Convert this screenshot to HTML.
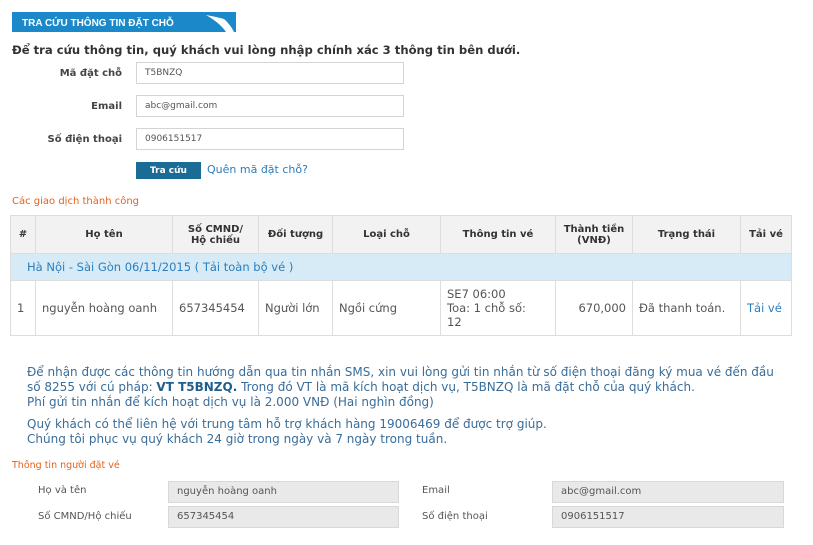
<!DOCTYPE html>
<html><head><meta charset="utf-8"><style>
*{margin:0;padding:0;box-sizing:border-box}
body{width:813px;height:545px;background:#fff;font-family:"DejaVu Sans","Liberation Sans",sans-serif;font-size:10px;color:#333;position:relative;overflow:hidden}
.a{position:absolute;white-space:nowrap}
.lbl{position:absolute;right:691px;font-weight:bold;font-size:10px;color:#444}
.inp{position:absolute;left:136px;width:268px;height:22px;border:1px solid #d4d4d4;background:#fff;font-size:9px;color:#555;padding:5px 8px}
table{position:absolute;left:10px;top:215px;width:782px;border-collapse:collapse;font-size:11.5px}
td,th{border:1px solid #ddd;padding:2px 6px}
th{background:#f2f2f2;font-weight:bold;font-size:10px;color:#333;height:38px;text-align:center}
.blue{color:#2a7dbd}
.p{position:absolute;left:27px;color:#3a6d99;font-size:12px;line-height:15px;white-space:nowrap}
.ro{position:absolute;height:22px;border:1px solid #d8d8d8;background:#e9e9e9;font-size:10px;color:#555;padding:4px 8px}
.l2{position:absolute;font-size:10px;color:#555}
</style></head><body>
<svg class="a" style="left:12px;top:12px" width="224" height="20"><rect width="224" height="20" fill="#1b88c9"/><path d="M194 3 Q205 5 212 7 Q218 12 222 20 L214 20 Q208 11 194 3Z" fill="#fff"/><text x="10" y="14" fill="#fff" font-family="Liberation Sans" font-size="10" font-weight="bold">TRA CỨU THÔNG TIN ĐẶT CHỖ</text></svg>
<div class="a" style="left:12px;top:43px;font-weight:bold;font-size:11.6px;color:#333">Để tra cứu thông tin, quý khách vui lòng nhập chính xác 3 thông tin bên dưới.</div>
<div class="lbl" style="top:68px">Mã đặt chỗ</div>
<div class="inp" style="top:62px">T5BNZQ</div>
<div class="lbl" style="top:101px">Email</div>
<div class="inp" style="top:95px">abc@gmail.com</div>
<div class="lbl" style="top:134px">Số điện thoại</div>
<div class="inp" style="top:128px">0906151517</div>
<div class="a" style="left:136px;top:162px;width:65px;height:17px;background:#1a6c96;color:#fff;font-weight:bold;font-size:9px;display:flex;align-items:center;justify-content:center">Tra cứu</div>
<div class="a blue" style="left:207px;top:163px;font-size:11px">Quên mã đặt chỗ?</div>
<div class="a" style="left:12px;top:196px;color:#e2621b;font-size:10px">Các giao dịch thành công</div>
<table>
<tr><th style="width:25px">#</th><th style="width:137px">Họ tên</th><th style="width:86px">Số CMND/<br>Hộ chiếu</th><th style="width:74px">Đối tượng</th><th style="width:108px">Loại chỗ</th><th style="width:115px">Thông tin vé</th><th style="width:77px">Thành tiền<br>(VNĐ)</th><th style="width:108px">Trạng thái</th><th>Tải vé</th></tr>
<tr><td colspan="9" style="background:#d6ebf6;height:27px;color:#2a7dbd;padding-left:16px">Hà Nội - Sài Gòn 06/11/2015 ( <span>Tải toàn bộ vé</span> )</td></tr>
<tr style="height:55px;color:#555"><td>1</td><td>nguyễn hoàng oanh</td><td>657345454</td><td>Người lớn</td><td>Ngồi cứng</td><td style="line-height:14px">SE7 06:00<br>Toa: 1 chỗ số:<br>12</td><td style="text-align:right">670,000</td><td>Đã thanh toán.</td><td class="blue">Tải vé</td></tr>
</table>
<div class="p" style="top:365px">Để nhận được các thông tin hướng dẫn qua tin nhắn SMS, xin vui lòng gửi tin nhắn từ số điện thoại đăng ký mua vé đến đầu<br>số 8255 với cú pháp: <b style="color:#1f5f8f">VT T5BNZQ.</b> Trong đó VT là mã kích hoạt dịch vụ, T5BNZQ là mã đặt chỗ của quý khách.<br>Phí gửi tin nhắn để kích hoạt dịch vụ là 2.000 VNĐ (Hai nghìn đồng)</div>
<div class="p" style="top:417px">Quý khách có thể liên hệ với trung tâm hỗ trợ khách hàng 19006469 để được trợ giúp.<br>Chúng tôi phục vụ quý khách 24 giờ trong ngày và 7 ngày trong tuần.</div>
<div class="a" style="left:12px;top:460px;color:#e2621b;font-size:9.5px">Thông tin người đặt vé</div>
<div class="l2" style="left:38px;top:485px">Họ và tên</div>
<div class="ro" style="left:168px;top:481px;width:231px">nguyễn hoàng oanh</div>
<div class="l2" style="left:422px;top:485px">Email</div>
<div class="ro" style="left:552px;top:481px;width:232px">abc@gmail.com</div>
<div class="l2" style="left:38px;top:511px">Số CMND/Hộ chiếu</div>
<div class="ro" style="left:168px;top:506px;width:231px">657345454</div>
<div class="l2" style="left:422px;top:511px">Số điện thoại</div>
<div class="ro" style="left:552px;top:506px;width:232px">0906151517</div>
</body></html>
